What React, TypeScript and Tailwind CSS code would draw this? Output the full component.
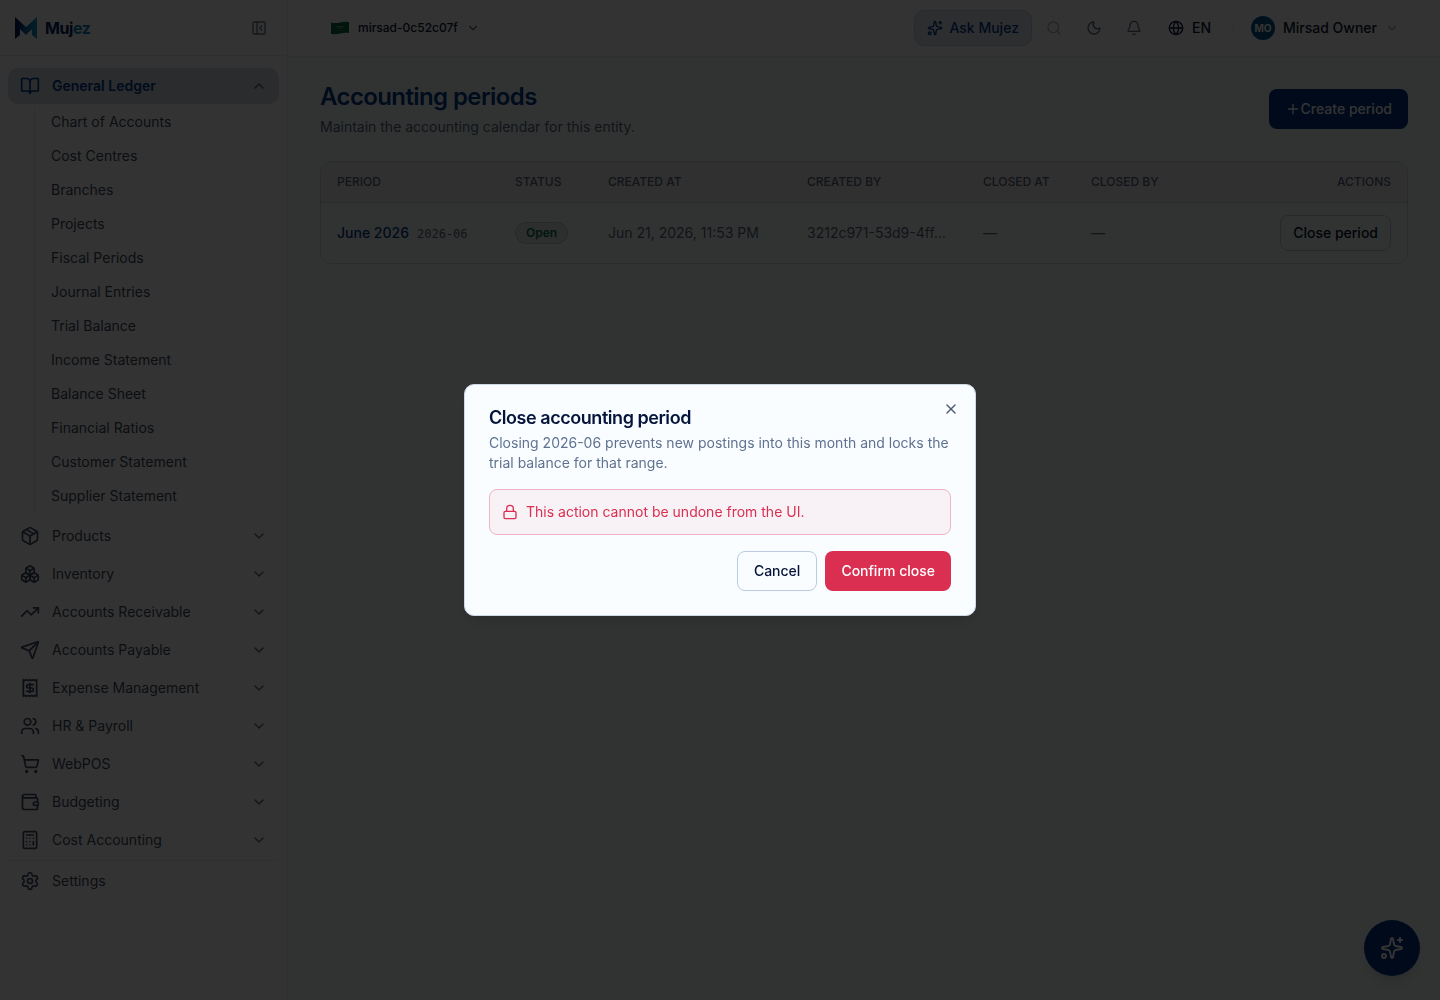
import type { ReactNode } from "react";
import {
  Bell,
  BookOpen,
  Boxes,
  Calculator,
  ChevronDown,
  ChevronUp,
  Globe,
  Lock,
  Moon,
  Package,
  PanelLeftClose,
  Plus,
  Search,
  Send,
  Settings,
  ShoppingCart,
  Sparkles,
  TrendingUp,
  Users,
  Wallet,
  X,
  type LucideIcon,
} from "lucide-react";

const LEDGER_LINKS = [
  "Chart of Accounts",
  "Cost Centres",
  "Branches",
  "Projects",
  "Fiscal Periods",
  "Journal Entries",
  "Trial Balance",
  "Income Statement",
  "Balance Sheet",
  "Financial Ratios",
  "Customer Statement",
  "Supplier Statement",
];

// Receipt with serrated edges on both ends and a dollar sign
function ExpenseIcon({ className }: { className?: string }) {
  return (
    <svg
      viewBox="0 0 24 24"
      fill="none"
      stroke="currentColor"
      strokeWidth={2}
      strokeLinecap="round"
      strokeLinejoin="round"
      className={className}
      aria-hidden="true"
    >
      <path d="M4 2v20l2-1 2 1 2-1 2 1 2-1 2 1 2-1 2 1V2l-2 1-2-1-2 1-2-1-2 1-2-1-2 1Z" />
      <path d="M16 8h-6a2 2 0 1 0 0 4h4a2 2 0 1 1 0 4H8" />
      <path d="M12 17.5v-11" />
    </svg>
  );
}

const MODULES: { label: string; icon: LucideIcon | typeof ExpenseIcon }[] = [
  { label: "Products", icon: Package },
  { label: "Inventory", icon: Boxes },
  { label: "Accounts Receivable", icon: TrendingUp },
  { label: "Accounts Payable", icon: Send },
  { label: "Expense Management", icon: ExpenseIcon },
  { label: "HR & Payroll", icon: Users },
  { label: "WebPOS", icon: ShoppingCart },
  { label: "Budgeting", icon: Wallet },
  { label: "Cost Accounting", icon: Calculator },
];

function Logo() {
  return (
    <a href="#" className="flex items-center gap-2">
      <svg viewBox="0 0 22 22" className="size-[22px]" aria-hidden="true">
        <defs>
          <linearGradient id="logo-left" x1="0" y1="0" x2="1" y2="0">
            <stop offset="0" stopColor="#04184f" />
            <stop offset="0.45" stopColor="#082a6e" />
            <stop offset="1" stopColor="#0c6cab" />
          </linearGradient>
          <linearGradient id="logo-right" x1="0" y1="0" x2="1" y2="0">
            <stop offset="0" stopColor="#0c6cab" />
            <stop offset="1" stopColor="#1590c4" />
          </linearGradient>
        </defs>
        <path d="M0 0 L11 10 V18 L5 12 V18 L0 22 Z" fill="url(#logo-left)" />
        <path d="M22 0 L11 10 V18 L17 12 V18 L22 22 Z" fill="url(#logo-right)" />
      </svg>
      <span className="text-base font-bold tracking-tight text-[#08205f]">
        Muj<span className="text-[#0f7fb4]">ez</span>
      </span>
    </a>
  );
}

function Flag() {
  return (
    <svg viewBox="0 0 19 14" className="h-3.5 w-[19px]" aria-hidden="true">
      <path d="M0 1.5 Q4.5 2.5 9 1.5 T18 1 V12 Q13.5 11.5 9 12.5 T0 13 Z" fill="#0b6b43" />
      <path d="M5 5.5h8M6 7h6" stroke="#4f9a78" strokeWidth="1" />
      <path d="M6 9.5h6" stroke="#4f9a78" strokeWidth="0.5" />
    </svg>
  );
}

function Sidebar() {
  return (
    <aside className="flex w-72 shrink-0 flex-col border-r border-[#e8ecef] bg-white">
      <div className="flex h-14 items-center justify-between border-b border-[#e8ecef] pr-5 pl-[15px]">
        <Logo />
        <button type="button" aria-label="Collapse sidebar" className="text-[#64748b]">
          <PanelLeftClose className="size-4" />
        </button>
      </div>
      <nav className="flex flex-col gap-0.5 px-2 py-3 text-sm text-[#3b4a60]">
        <button
          type="button"
          className="flex h-9 items-center gap-3 rounded-[10px] bg-[#d3dce6] px-3 font-semibold text-[#023a8c]"
        >
          <BookOpen className="size-5" />
          General Ledger
          <ChevronUp className="ml-auto size-4 text-[#56657e]" />
        </button>
        <ul className="mb-1 ml-[26px] flex flex-col gap-0.5 border-l border-[#e8ecef] pl-1">
          {LEDGER_LINKS.map((label) => (
            <li key={label}>
              <a href="#" className="flex h-8 items-center px-3">
                {label}
              </a>
            </li>
          ))}
        </ul>
        {MODULES.map(({ label, icon: Icon }) => (
          <button key={label} type="button" className="flex h-9 items-center gap-3 px-3">
            <Icon className="size-5" />
            {label}
            <ChevronDown className="ml-auto size-4 text-[#56657e]" />
          </button>
        ))}
        <div className="border-t border-[#e8ecef] pt-0.5">
          <a href="#" className="flex h-9 items-center gap-3 px-3">
            <Settings className="size-5" />
            Settings
          </a>
        </div>
      </nav>
    </aside>
  );
}

function IconButton({ label, children }: { label: string; children: ReactNode }) {
  return (
    <button
      type="button"
      aria-label={label}
      className="flex size-9 items-center justify-center text-[#56657e]"
    >
      {children}
    </button>
  );
}

function TopBar() {
  return (
    <header className="flex h-[57px] shrink-0 items-center justify-between border-b border-[#e8ecef] bg-white px-8 text-sm font-medium text-[#0b1733]">
      <button
        type="button"
        className="flex h-8 items-center gap-2 rounded-lg border border-transparent px-2.5 text-xs"
      >
        <Flag />
        mirsad-0c52c07f
        <ChevronDown className="size-3.5 text-[#56657e]" />
      </button>
      <div className="flex items-center gap-1">
        <button
          type="button"
          className="flex h-9 items-center gap-1.5 rounded-[10px] border border-[#c3d0e0] bg-[#dfe7ef] px-3 text-[#023a8c]"
        >
          <Sparkles className="size-4" />
          Ask Mujez
        </button>
        <IconButton label="Search">
          <Search className="size-4 text-[#a9b2bf]" />
        </IconButton>
        <IconButton label="Toggle theme">
          <Moon className="size-4" />
        </IconButton>
        <IconButton label="Notifications">
          <Bell className="size-4" />
        </IconButton>
        <button type="button" className="flex h-9 items-center gap-2 pr-3.5 pl-3">
          <Globe className="size-4" />
          EN
        </button>
        <div className="mx-1 h-4 w-px bg-[#e8ecef]" />
        <button
          type="button"
          className="flex h-9 items-center gap-2 rounded-lg border border-transparent px-2"
        >
          <span className="flex size-6 items-center justify-center rounded-full bg-[#04568f] text-[10px] font-bold text-white">
            MO
          </span>
          Mirsad Owner
          <ChevronDown className="size-3.5 text-[#94a3b8]" />
        </button>
      </div>
    </header>
  );
}

function PeriodsTable() {
  return (
    <div className="overflow-hidden rounded-[10px] border border-[#d0d8e4]">
      <table className="w-full table-fixed text-left text-sm text-[#56657e]">
        <colgroup>
          <col className="w-[178px]" />
          <col className="w-[93px]" />
          <col className="w-[199px]" />
          <col className="w-[176px]" />
          <col className="w-[108px]" />
          <col className="w-[116px]" />
          <col />
        </colgroup>
        <thead className="bg-[#f3f0f0] text-xs uppercase">
          <tr className="h-10 border-b border-[#d0d8e4]">
            <th className="px-4 font-medium">Period</th>
            <th className="px-4 font-medium">Status</th>
            <th className="px-4 font-medium">Created at</th>
            <th className="px-4 font-medium">Created by</th>
            <th className="px-4 font-medium">Closed at</th>
            <th className="px-4 font-medium">Closed by</th>
            <th className="px-4 text-right font-medium">Actions</th>
          </tr>
        </thead>
        <tbody>
          <tr>
            <td className="px-4 py-3 whitespace-nowrap">
              <span className="font-medium text-[#023a8c]">June 2026</span>
              <span className="ml-2 font-['DejaVu_Sans_Mono',monospace] text-xs">2026-06</span>
            </td>
            <td className="px-4 py-3">
              <span className="inline-flex rounded-full border border-[#b4cfc6] bg-[#dbe9e3] px-2.5 py-0.5 text-xs font-semibold text-[#067043]">
                Open
              </span>
            </td>
            <td className="px-4 py-3">Jun 21, 2026, 11:53 PM</td>
            <td className="px-4 py-3">3212c971-53d9-4ff…</td>
            <td className="px-4 py-3">—</td>
            <td className="px-4 py-3">—</td>
            <td className="px-4 py-3 text-right">
              <button
                type="button"
                className="h-9 rounded-lg border border-[#bfcadb] px-3 font-medium text-[#04122e]"
              >
                Close period
              </button>
            </td>
          </tr>
        </tbody>
      </table>
    </div>
  );
}

function ClosePeriodDialog() {
  return (
    <div className="fixed inset-0 z-50 flex items-center justify-center bg-black/80">
      <div
        role="dialog"
        aria-modal="true"
        aria-labelledby="close-period-title"
        className="relative flex w-full max-w-lg flex-col gap-4 rounded-[10px] border border-[#ccd9e8] bg-[#fafdff] p-6 shadow-lg"
      >
        <div className="flex flex-col gap-1.5">
          <h2
            id="close-period-title"
            className="text-lg leading-none font-semibold tracking-tight text-[#04143a]"
          >
            Close accounting period
          </h2>
          <p className="text-sm text-[#5f7290]">
            Closing 2026-06 prevents new postings into this month and locks the trial balance for
            that range.
          </p>
        </div>
        <div
          role="alert"
          className="flex items-center gap-2 rounded-lg border border-[#f0b4c3] bg-[#f8f1f6] p-3 text-sm text-[#da2f50]"
        >
          <Lock className="size-4" />
          This action cannot be undone from the UI.
        </div>
        <div className="flex justify-end gap-2 text-sm font-medium">
          <button
            type="button"
            className="h-10 rounded-lg border border-[#bccbe0] px-4 text-[#04143a]"
          >
            Cancel
          </button>
          <button type="button" className="h-10 rounded-lg bg-[#da2f50] px-4 text-white">
            Confirm close
          </button>
        </div>
        <button
          type="button"
          aria-label="Close"
          className="absolute top-4 right-4 text-[#4d5a72]"
        >
          <X className="size-4" />
        </button>
      </div>
    </div>
  );
}

export default function App() {
  return (
    <div className="flex min-h-screen bg-[#f5fffa] font-['Inter',sans-serif]">
      <Sidebar />
      <div className="flex min-w-0 flex-1 flex-col">
        <TopBar />
        <main className="flex flex-col gap-6 px-8 py-6">
          <div className="flex items-center justify-between">
            <div className="flex flex-col gap-1">
              <h1 className="text-2xl font-semibold tracking-tight text-[#023a8c]">
                Accounting periods
              </h1>
              <p className="text-sm text-[#56657e]">Maintain the accounting calendar for this entity.</p>
            </div>
            <button
              type="button"
              className="flex h-10 items-center rounded-lg bg-[#003580] px-4 text-sm font-medium text-white"
            >
              <Plus className="size-4" />
              Create period
            </button>
          </div>
          <PeriodsTable />
        </main>
      </div>
      <button
        type="button"
        aria-label="Open assistant"
        className="fixed right-5 bottom-6 flex size-14 items-center justify-center rounded-full bg-[#003580] text-white shadow-lg"
      >
        <Sparkles className="size-6" />
      </button>
      <ClosePeriodDialog />
    </div>
  );
}
